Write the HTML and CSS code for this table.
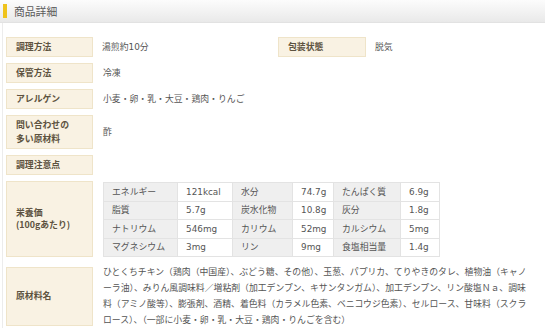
FILE: index.html
```html
<!DOCTYPE html>
<html lang="ja">
<head>
<meta charset="utf-8">
<link rel="stylesheet" href="styles.css">
</head>
<body>
<div class="head"><span class="bar"></span><h2 class="title">商品詳細</h2></div>
<div class="content">
  <div class="row pair">
    <div class="cell first"><div class="label">調理方法</div><div class="value">湯煎約10分</div></div>
    <div class="cell"><div class="label">包装状態</div><div class="value">脱気</div></div>
  </div>
  <div class="row"><div class="label">保管方法</div><div class="value">冷凍</div></div>
  <div class="row"><div class="label">アレルゲン</div><div class="value">小麦・卵・乳・大豆・鶏肉・りんご</div></div>
  <div class="row"><div class="label">問い合わせの<br>多い原材料</div><div class="value">酢</div></div>
  <div class="row"><div class="label">調理注意点</div><div class="value"></div></div>
  <div class="row stretch">
    <div class="label">栄養価<br>(100gあたり)</div>
    <div class="value">
      <table class="nutri">
        <colgroup><col class="c1"><col class="c2"><col class="c3"><col class="c4"><col class="c5"><col class="c6"></colgroup>
        <tr><th>エネルギー</th><td>121kcal</td><th>水分</th><td>74.7g</td><th>たんぱく質</th><td>6.9g</td></tr>
        <tr><th>脂質</th><td>5.7g</td><th>炭水化物</th><td>10.8g</td><th>灰分</th><td>1.8g</td></tr>
        <tr><th>ナトリウム</th><td>546mg</td><th>カリウム</th><td>52mg</td><th>カルシウム</th><td>5mg</td></tr>
        <tr><th>マグネシウム</th><td>3mg</td><th>リン</th><td>9mg</td><th>食塩相当量</th><td>1.4g</td></tr>
      </table>
    </div>
  </div>
  <div class="row tall">
    <div class="label">原材料名</div>
    <div class="value long">ひとくちチキン（鶏肉（中国産）、ぶどう糖、その他）、玉葱、パプリカ、てりやきのタレ、植物油（キャノ<br>ーラ油）、みりん風調味料／増粘剤（加工デンプン、キサンタンガム）、加工デンプン、リン酸塩Ｎａ、調味<br>料（アミノ酸等）、膨張剤、酒精、着色料（カラメル色素、ベニコウジ色素）、セルロース、甘味料（スクラ<br>ロース）、（一部に小麦・卵・乳・大豆・鶏肉・りんごを含む）</div>
  </div>
</div>
</body>
</html>
```
FILE: styles.css
```css
html, body { margin: 0; padding: 0; background: #fff; }
body {
  font-family: "DejaVu Sans", "Noto Sans CJK JP", sans-serif;
  font-size: 8.85px;
  color: #555;
  width: 545px;
  height: 328px;
  overflow: hidden;
}
.head {
  height: 23px;
  box-sizing: border-box;
  background: linear-gradient(#fcfcfc, #e9e9e9);
  border-bottom: 1px solid #e2e2e2;
  display: flex;
  align-items: center;
  padding-left: 3px;
}
.bar {
  width: 4px;
  height: 14px;
  background: #efc31c;
  margin-right: 7px;
}
.title {
  margin: 0;
  font-family: "Noto Sans CJK JP", sans-serif;
  font-size: 10.8px;
  font-weight: normal;
  color: #5a5a5a;
}
.content {
  margin-left: 2px;
  border-left: 1px solid #ececec;
  padding: 14px 5px 0 3px;
  height: 305px;
  box-sizing: border-box;
}
.row {
  display: flex;
  align-items: center;
  margin-bottom: 6px;
}
.row.stretch { align-items: stretch; margin-bottom: 7px; }
.pair .cell { display: flex; align-items: center; flex: 1; min-width: 0; }
.pair .cell.first { flex: none; width: 272px; }
.label {
  flex: none;
  width: 87px;
  box-sizing: border-box;
  min-height: 20px;
  padding: 2px 9px;
  line-height: 14px;
  background: #f9f2e3;
  border: 1px solid #efe4c9;
  font-family: "Noto Sans CJK JP", sans-serif;
  font-weight: bold;
  color: #5d5240;
  display: flex;
  align-items: center;
}
.pair .cell:not(.first) .label { width: 88px; }
.stretch .label { line-height: 12px; }
.tall .label { height: 59px; }
.value {
  margin-left: 10px;
  line-height: 14px;
}
.pair .value { margin-left: 9px; }
.stretch .value { margin-top: 1px; }
.long {
  line-height: 16px;
  white-space: nowrap;
}
.nutri {
  border-collapse: collapse;
  table-layout: fixed;
  width: 336px;
}
.nutri th, .nutri td {
  border: 1px solid #e3e3e3;
  padding: 0 0 0 8px;
  height: 17.5px;
  line-height: 14px;
  text-align: left;
  font-weight: normal;
  color: #555;
  white-space: nowrap;
}
.nutri th { background: #efefef; }
.nutri td { background: #fff; }
.c1 { width: 74px; }
.c2 { width: 55px; }
.c3 { width: 60px; }
.c4 { width: 41px; }
.c5 { width: 67px; }
.c6 { width: 39px; }
```
